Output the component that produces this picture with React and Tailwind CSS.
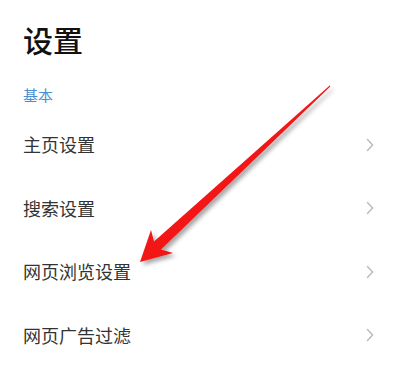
import React from 'react';

const items = ['主页设置', '搜索设置', '网页浏览设置', '网页广告过滤'];

function Chevron() {
  return (
    <svg width="8" height="14" viewBox="0 0 8 14" className="shrink-0">
      <path d="M1.5 1.5 L6.5 7 L1.5 12.5" fill="none" stroke="#bdbdbd" strokeWidth="1.6" strokeLinecap="round" strokeLinejoin="round" />
    </svg>
  );
}

function Arrow() {
  return (
    <svg className="absolute inset-0 pointer-events-none" width="400" height="371" viewBox="0 0 400 371">
      <defs>
        <filter id="shadow" x="-20%" y="-20%" width="140%" height="140%">
          <feDropShadow dx="3" dy="3" stdDeviation="2" floodColor="#000" floodOpacity="0.35" />
        </filter>
      </defs>
      <polygon
        filter="url(#shadow)"
        fill="#f31414"
        points="140,262 173,253 161,249.5 330.3,86.4 329.7,85.6 154,241.5 151,230"
      />
    </svg>
  );
}

export default function App() {
  return (
    <div
      className="relative w-[400px] h-[371px] overflow-hidden bg-white"
      style={{ fontFamily: '"Noto Sans CJK SC", "Noto Sans", sans-serif' }}
    >
      <div className="pl-[23px] pr-[26px]">
        <h1 className="mt-[24px] h-[30px] leading-[30px] text-[30px] font-medium text-[#111]">设置</h1>
        <div className="mt-[31px] h-[20px] leading-[20px] text-[15px] text-[#4a8fd1]">基本</div>
        <div className="mt-[8px] flex flex-col">
          {items.map((label) => (
            <div key={label} className="h-[63.5px] flex items-center justify-between">
              <span className="text-[18px] text-[#333]">{label}</span>
              <Chevron />
            </div>
          ))}
        </div>
      </div>
      <Arrow />
    </div>
  );
}
